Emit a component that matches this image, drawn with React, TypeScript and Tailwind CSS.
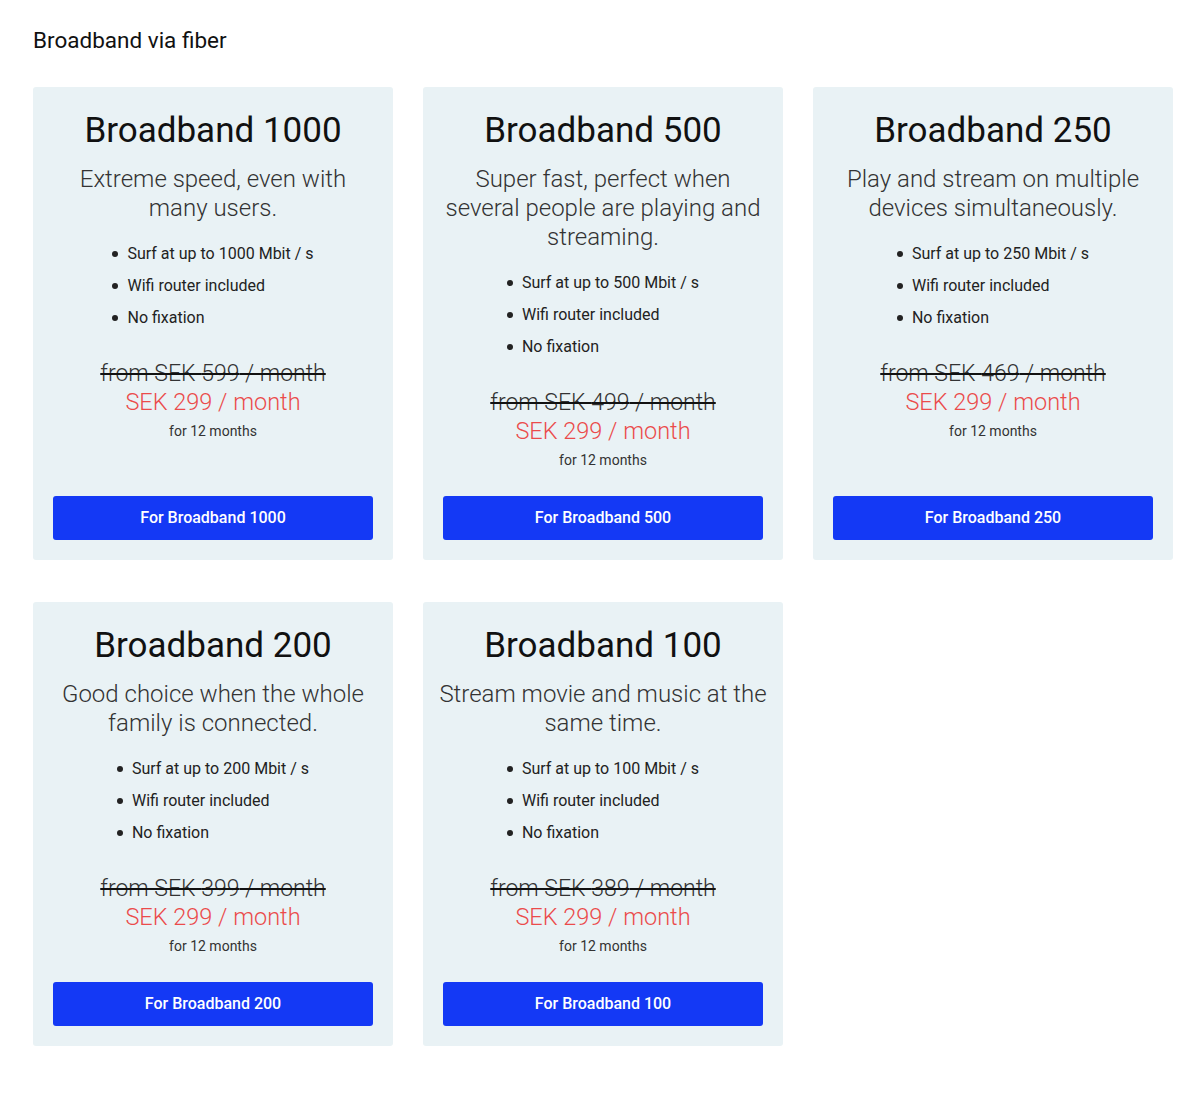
const plans = [
  {
    name: 'Broadband 1000',
    text: 'Extreme speed, even with many users.',
    speed: '1000',
    from: '599',
  },
  {
    name: 'Broadband 500',
    text: 'Super fast, perfect when several people are playing and streaming.',
    speed: '500',
    from: '499',
  },
  {
    name: 'Broadband 250',
    text: 'Play and stream on multiple devices simultaneously.',
    speed: '250',
    from: '469',
  },
  {
    name: 'Broadband 200',
    text: 'Good choice when the whole family is connected.',
    speed: '200',
    from: '399',
  },
  {
    name: 'Broadband 100',
    text: 'Stream movie and music at the same time.',
    speed: '100',
    from: '389',
  },
]

type Plan = (typeof plans)[number]

function Bullet({ children }: { children: React.ReactNode }) {
  return (
    <li className="flex items-center gap-[9px]">
      <span className="h-[6px] w-[6px] shrink-0 rounded-full bg-[#222]" />
      {children}
    </li>
  )
}

/** One fiber plan: title, pitch, perks, prices and the order button pinned to the bottom. */
function PlanCard({ plan }: { plan: Plan }) {
  return (
    <div className="flex flex-col items-center rounded-[3px] bg-[#e9f2f5] px-4 pb-5 pt-[21px] text-center">
      <h3 className="text-[35px] font-normal leading-[46px] text-[#111]">{plan.name}</h3>
      <p className="mt-[11px] text-[24px] font-light leading-[29px] text-[#333]">{plan.text}</p>
      <ul className="mt-[20px] flex flex-col gap-[10px] text-left text-[16px] leading-[22px] text-[#222]">
        <Bullet>Surf at up to {plan.speed} Mbit / s</Bullet>
        <Bullet>Wifi router included</Bullet>
        <Bullet>No fixation</Bullet>
      </ul>
      <p className="mt-[30px] text-[23px] font-light leading-[29px] text-[#333] line-through decoration-[#111] decoration-2">
        from SEK {plan.from} / month
      </p>
      <p className="text-[23.5px] font-light leading-[29px] text-[#eb4b4b]">SEK 299 / month</p>
      <p className="text-[14px] leading-[29px] text-[#333]">for 12 months</p>
      <div className="mt-auto w-full px-1 pt-[21px]">
        <button
          type="button"
          className="h-[44px] w-full rounded-[3px] bg-[#1439f5] text-[16px] font-medium text-white"
        >
          For {plan.name}
        </button>
      </div>
    </div>
  )
}

export default function App() {
  return (
    <div className="min-h-[1095px] bg-white px-[33px] pt-[26px] font-['Roboto',sans-serif]">
      <h2 className="text-[22.5px] font-normal leading-[28px] text-[#111]">Broadband via fiber</h2>
      <div className="mt-[33px] grid w-[1140px] grid-cols-3 gap-x-[30px] gap-y-[42px]">
        {plans.map((p) => (
          <PlanCard key={p.name} plan={p} />
        ))}
      </div>
    </div>
  )
}
